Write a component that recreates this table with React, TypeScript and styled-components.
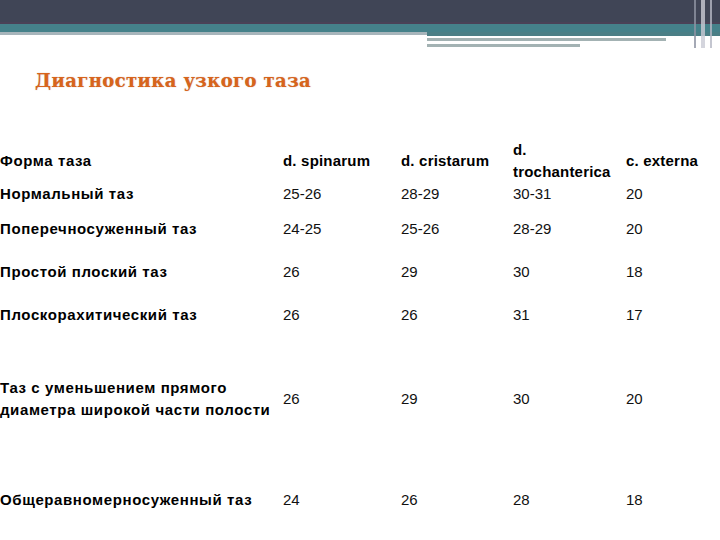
import styled, { createGlobalStyle } from "styled-components";

const GlobalStyle = createGlobalStyle`
  html, body {
    margin: 0;
    padding: 0;
    background: #ffffff;
  }
  body {
    width: 720px;
    height: 540px;
    overflow: hidden;
    font-family: "Liberation Sans", Arial, sans-serif;
  }
`;

const rows = [
  { name: ["Нормальный таз"], values: ["25-26", "28-29", "30-31", "20"], height: 22 },
  { name: ["Поперечносуженный таз"], values: ["24-25", "25-26", "28-29", "20"], height: 48 },
  { name: ["Простой плоский таз"], values: ["26", "29", "30", "18"], height: 38 },
  { name: ["Плоскорахитический таз"], values: ["26", "26", "31", "17"], height: 48 },
  {
    name: ["Таз с уменьшением прямого", "диаметра широкой части полости"],
    values: ["26", "29", "30", "20"],
    height: 120,
  },
  { name: ["Общеравномерносуженный таз"], values: ["24", "26", "28", "18"], height: 82 },
];

const columns = ["d. spinarum", "d. cristarum", "d. trochanterica", "c. externa"];

export default function App() {
  return (
    <>
      <GlobalStyle />
      <Slide>
        <Banner>
          <DarkBand />
          <PurpleLine />
          <TealBand />
          <BannerFoot>
            <LeftFoot />
            <RightFoot>
              <TealTail />
              <WhiteLine />
              <GrayLine $width={239} />
              <Spacer $h={3} />
              <GrayLine $width={153} />
            </RightFoot>
          </BannerFoot>
          <EdgeLines>
            <EdgeLine $color="#8e93a3" />
            <EdgeLine $color="#c9cbd4" $w={4} />
            <EdgeLine $color="#b5b8c4" $w={2} />
          </EdgeLines>
        </Banner>

        <Title>Диагностика узкого таза</Title>

        <Table>
          <colgroup>
            <col style={{ width: 283 }} />
            <col style={{ width: 118 }} />
            <col style={{ width: 112 }} />
            <col style={{ width: 113 }} />
            <col />
          </colgroup>
          <thead>
            <Row $height={45}>
              <HeadCell $cyrillic>Форма таза</HeadCell>
              {columns.map((c) => (
                <HeadCell key={c}>
                  {c === "d. trochanterica" ? (
                    <>
                      d.
                      <br />
                      trochanterica
                    </>
                  ) : (
                    c
                  )}
                </HeadCell>
              ))}
            </Row>
          </thead>
          <tbody>
            {rows.map((r, i) => (
              <Row key={i} $height={r.height}>
                <NameCell>
                  {r.name.map((line, j) => (
                    <span key={j}>
                      {j > 0 && <br />}
                      {line}
                    </span>
                  ))}
                </NameCell>
                {r.values.map((v, j) => (
                  <ValueCell key={j}>{v}</ValueCell>
                ))}
              </Row>
            ))}
          </tbody>
        </Table>
      </Slide>
    </>
  );
}

const Slide = styled.div`
  width: 720px;
  height: 540px;
  display: flex;
  flex-direction: column;
  background: #ffffff;
  overflow: hidden;
`;

const Banner = styled.div`
  position: relative;
  display: flex;
  flex-direction: column;
  height: 48px;
  flex-shrink: 0;
`;

const DarkBand = styled.div`
  height: 22px;
  background: #404556;
`;

const PurpleLine = styled.div`
  height: 2px;
  background: #4a4257;
`;

const TealBand = styled.div`
  height: 8px;
  background: #45818a;
`;

const BannerFoot = styled.div`
  display: flex;
`;

const LeftFoot = styled.div`
  width: 427px;
  height: 3px;
  background: #a7b5bb;
`;

const RightFoot = styled.div`
  flex: 1;
  display: flex;
  flex-direction: column;
`;

const TealTail = styled.div`
  height: 4px;
  background: #4b7f86;
`;

const WhiteLine = styled.div`
  height: 2px;
  background: #ffffff;
`;

const GrayLine = styled.div<{ $width: number }>`
  width: ${(p) => p.$width}px;
  height: 3px;
  background: #a3b2b3;
`;

const Spacer = styled.div<{ $h: number }>`
  height: ${(p) => p.$h}px;
`;

const EdgeLines = styled.div`
  position: absolute;
  top: 0;
  right: 8px;
  height: 48px;
  display: flex;
  gap: 5px;
`;

const EdgeLine = styled.div<{ $color: string; $w?: number }>`
  width: ${(p) => p.$w ?? 2}px;
  height: 100%;
  background: ${(p) => p.$color};
  opacity: 0.8;
`;

const Title = styled.h1`
  margin: 22px 0 0 35px;
  height: 22px;
  font-family: "DejaVu Serif", "Liberation Serif", serif;
  font-weight: bold;
  font-size: 18px;
  line-height: 22px;
  color: #d8641c;
  letter-spacing: 0.4px;
  text-shadow: 0 0 1px rgba(140, 60, 10, 0.5);
`;

const Table = styled.table`
  margin-top: 46px;
  width: 720px;
  border-collapse: collapse;
  table-layout: fixed;
  font-size: 15px;
  line-height: 22px;
  color: #000000;
`;

const Row = styled.tr<{ $height: number }>`
  height: ${(p) => p.$height}px;
`;

const HeadCell = styled.th<{ $cyrillic?: boolean }>`
  padding: 0;
  text-align: left;
  vertical-align: middle;
  font-weight: bold;
  white-space: nowrap;
  letter-spacing: ${(p) => (p.$cyrillic ? "0.6px" : "0.2px")};
`;

const NameCell = styled.td`
  padding: 0;
  vertical-align: middle;
  font-weight: bold;
  white-space: nowrap;
  letter-spacing: 0.6px;
`;

const ValueCell = styled.td`
  padding: 0;
  vertical-align: middle;
  font-weight: normal;
  color: #111111;
`;
